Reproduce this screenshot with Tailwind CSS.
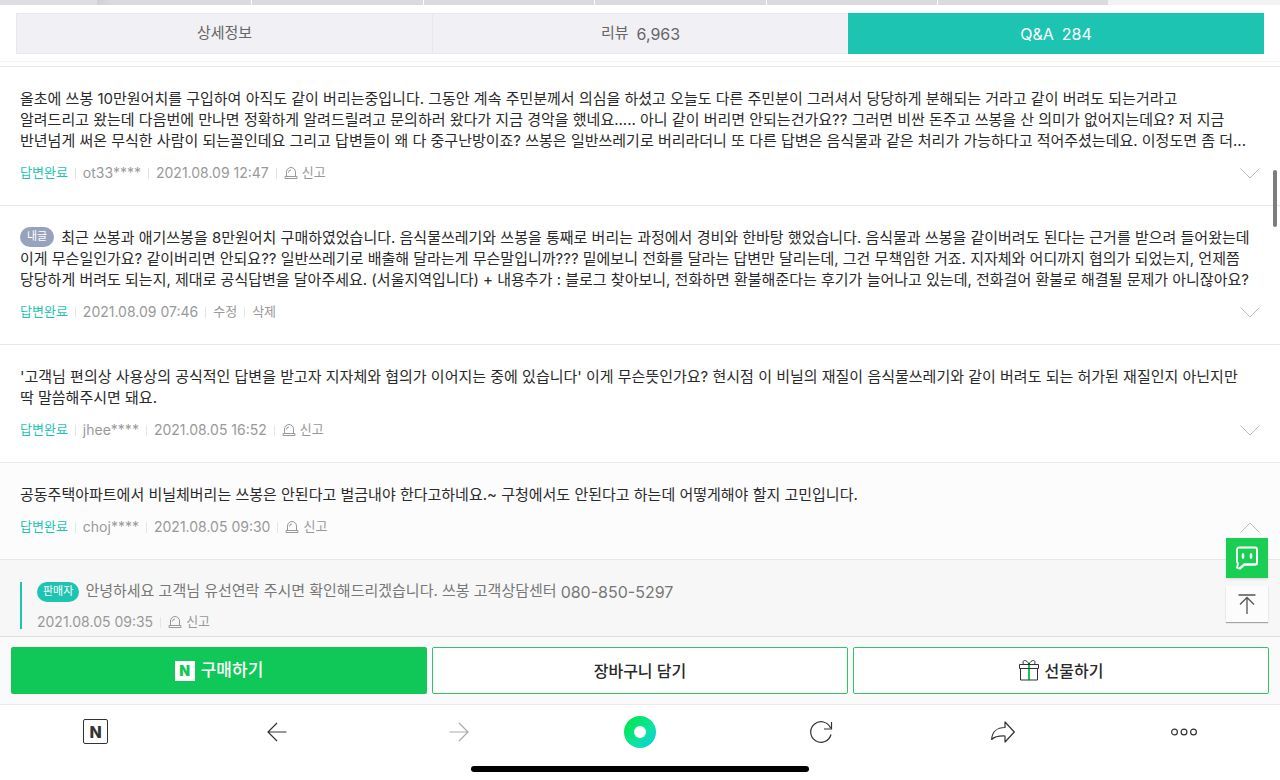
<!DOCTYPE html>
<html lang="ko">
<head>
    <meta charset="UTF-8">
    <meta name="viewport" content="width=device-width, initial-scale=1.0">
    <title>Q&amp;A</title>
    <script src="https://cdn.jsdelivr.net/npm/@tailwindcss/browser@4"></script>
</head>
<body class="relative flex h-screen flex-col overflow-hidden bg-white font-['Inter','Noto_Sans_CJK_KR',sans-serif] text-[#2a2a2a]">
    <!-- Shared icons -->
    <svg class="hidden" xmlns="http://www.w3.org/2000/svg">
        <symbol id="siren" viewBox="0 0 14 14" fill="none" stroke="currentColor">
            <path d="M2.5 10.5V6a4.5 4.5 0 0 1 9 0v4.5M1 12.5v-2h12v2zM4.5 6.500A2.500 2.500 0 0 1 7 4" />
        </symbol>
        <symbol id="chevron" viewBox="0 0 20 11" fill="none" stroke="currentColor">
            <path d="M.5.5 10 10 19.500.5" />
        </symbol>
    </svg>

    <!-- Page tabs -->
    <div class="flex h-[5px] shrink-0 bg-[#f3f3f5]">
        <div class="w-[97px] bg-[#dedee2]"></div>
        <div class="w-[155px] border-r border-white bg-linear-to-r from-[#cfcfd4] to-[#dbdbdf] to-10%"></div>
        <div class="w-[172px] border-r border-white bg-[#dbdbdf]"></div>
        <div class="w-[171px] border-r border-white bg-[#dbdbdf]"></div>
        <div class="w-[172px] border-r border-white bg-[#dbdbdf]"></div>
        <div class="w-[171px] border-r border-white bg-[#dbdbdf]"></div>
        <div class="w-[170px] bg-[#dbdbdf]"></div>
    </div>

    <nav class="shrink-0 border-b border-[#f3f3f3] px-4 pt-2 pb-[7px]">
        <div class="grid h-[41px] grid-cols-3 text-[15px] text-[#666]">
            <a href="#" class="flex items-center justify-center border border-r-0 border-[#e8e8ec] bg-[#f0f0f5]">상세정보</a>
            <a href="#" class="flex items-center justify-center gap-2 border border-r-0 border-[#e8e8ec] bg-[#f0f0f5]">리뷰 <span class="text-base">6,963</span></a>
            <a href="#" class="flex items-center justify-center gap-2 bg-[#1ec4b2] text-base text-white">Q&amp;A <span>284</span></a>
        </div>
    </nav>

    <main class="mt-1 min-h-0 flex-1 overflow-hidden border-t border-[#e8e8e8]">
        <article class="border-b border-[#e8e8e8] px-5 pt-[21px] pb-[23px]">
            <p class="text-[15px] leading-[21px] whitespace-nowrap">올초에 쓰봉 10만원어치를 구입하여 아직도 같이 버리는중입니다. 그동안 계속 주민분께서 의심을 하셨고 오늘도 다른 주민분이 그러셔서 당당하게 분해되는 거라고 같이 버려도 되는거라고<br>
                알려드리고 왔는데 다음번에 만나면 정확하게 알려드릴려고 문의하러 왔다가 지금 경악을 했네요..... 아니 같이 버리면 안되는건가요?? 그러면 비싼 돈주고 쓰봉을 산 의미가 없어지는데요? 저 지금<br>
                반년넘게 써온 무식한 사람이 되는꼴인데요 그리고 답변들이 왜 다 중구난방이죠? 쓰봉은 일반쓰레기로 버리라더니 또 다른 답변은 음식물과 같은 처리가 가능하다고 적어주셨는데요. 이정도면 좀 더...</p>
            <div class="mt-[13px] flex h-[18px] items-center text-[13px] text-[#999]">
                <span class="text-[#1ec4b2]">답변완료</span>
                <span class="mx-[7px] h-[11px] w-px bg-[#e5e5e5]"></span>
                <span class="text-sm">ot33****</span>
                <span class="mx-[7px] h-[11px] w-px bg-[#e5e5e5]"></span>
                <span class="text-sm">2021.08.09 12:47</span>
                <span class="mx-[7px] h-[11px] w-px bg-[#e5e5e5]"></span>
                <button type="button" class="flex items-center gap-1"><svg class="size-[14px]"><use href="#siren" /></svg>신고</button>
                <button type="button" aria-label="펼치기" class="ml-auto text-[#bbb]"><svg class="h-[11px] w-5"><use href="#chevron" /></svg></button>
            </div>
        </article>

        <article class="border-b border-[#e8e8e8] px-5 pt-[21px] pb-[23px]">
            <p class="text-[15px] leading-[21px] whitespace-nowrap"><span class="mr-[7px] inline-block h-5 rounded-full bg-[#97a2bd] px-[7px] align-top text-[11px] leading-[19px] text-white">내글</span>최근 쓰봉과 애기쓰봉을 8만원어치 구매하였었습니다. 음식물쓰레기와 쓰봉을 통째로 버리는 과정에서 경비와 한바탕 했었습니다. 음식물과 쓰봉을 같이버려도 된다는 근거를 받으려 들어왔는데<br>
                이게 무슨일인가요? 같이버리면 안되요?? 일반쓰레기로 배출해 달라는게 무슨말입니까??? 밑에보니 전화를 달라는 답변만 달리는데, 그건 무책임한 거죠. 지자체와 어디까지 협의가 되었는지, 언제쯤<br>
                당당하게 버려도 되는지, 제대로 공식답변을 달아주세요. (서울지역입니다) + 내용추가 : 블로그 찾아보니, 전화하면 환불해준다는 후기가 늘어나고 있는데, 전화걸어 환불로 해결될 문제가 아니잖아요?</p>
            <div class="mt-[13px] flex h-[18px] items-center text-[13px] text-[#999]">
                <span class="text-[#1ec4b2]">답변완료</span>
                <span class="mx-[7px] h-[11px] w-px bg-[#e5e5e5]"></span>
                <span class="text-sm">2021.08.09 07:46</span>
                <span class="mx-[7px] h-[11px] w-px bg-[#e5e5e5]"></span>
                <button type="button">수정</button>
                <span class="mx-[7px] h-[11px] w-px bg-[#e5e5e5]"></span>
                <button type="button">삭제</button>
                <button type="button" aria-label="펼치기" class="ml-auto text-[#bbb]"><svg class="h-[11px] w-5"><use href="#chevron" /></svg></button>
            </div>
        </article>

        <article class="border-b border-[#e8e8e8] px-5 pt-[21px] pb-[23px]">
            <p class="text-[15px] leading-[21px] whitespace-nowrap">'고객님 편의상 사용상의 공식적인 답변을 받고자 지자체와 협의가 이어지는 중에 있습니다' 이게 무슨뜻인가요? 현시점 이 비닐의 재질이 음식물쓰레기와 같이 버려도 되는 허가된 재질인지 아닌지만<br>
                딱 말씀해주시면 돼요.</p>
            <div class="mt-[13px] flex h-[18px] items-center text-[13px] text-[#999]">
                <span class="text-[#1ec4b2]">답변완료</span>
                <span class="mx-[7px] h-[11px] w-px bg-[#e5e5e5]"></span>
                <span class="text-sm">jhee****</span>
                <span class="mx-[7px] h-[11px] w-px bg-[#e5e5e5]"></span>
                <span class="text-sm">2021.08.05 16:52</span>
                <span class="mx-[7px] h-[11px] w-px bg-[#e5e5e5]"></span>
                <button type="button" class="flex items-center gap-1"><svg class="size-[14px]"><use href="#siren" /></svg>신고</button>
                <button type="button" aria-label="펼치기" class="ml-auto text-[#bbb]"><svg class="h-[11px] w-5"><use href="#chevron" /></svg></button>
            </div>
        </article>

        <article class="border-b border-[#e8e8e8] bg-[#fcfcfc] px-5 pt-[21px] pb-[23px]">
            <p class="text-[15px] leading-[21px] whitespace-nowrap">공동주택아파트에서 비닐체버리는 쓰봉은 안된다고 벌금내야 한다고하네요.~ 구청에서도 안된다고 하는데 어떻게해야 할지 고민입니다.</p>
            <div class="mt-[13px] flex h-[18px] items-center text-[13px] text-[#999]">
                <span class="text-[#1ec4b2]">답변완료</span>
                <span class="mx-[7px] h-[11px] w-px bg-[#e5e5e5]"></span>
                <span class="text-sm">choj****</span>
                <span class="mx-[7px] h-[11px] w-px bg-[#e5e5e5]"></span>
                <span class="text-sm">2021.08.05 09:30</span>
                <span class="mx-[7px] h-[11px] w-px bg-[#e5e5e5]"></span>
                <button type="button" class="flex items-center gap-1"><svg class="size-[14px]"><use href="#siren" /></svg>신고</button>
                <button type="button" aria-label="접기" class="ml-auto text-[#bbb]"><svg class="h-[11px] w-5 rotate-180"><use href="#chevron" /></svg></button>
            </div>
        </article>

        <!-- Seller reply -->
        <section class="bg-[#f7f7f7] px-5 pt-[22px] pb-8">
            <div class="border-l-2 border-[#1ec4b2] pl-[15px]">
                <p class="flex h-[19px] items-center text-[15px] text-[#777]"><span class="mr-[6px] h-5 rounded-full bg-[#1ec4b2] px-[6px] text-[11px] leading-[19px] text-white">판매자</span>안녕하세요 고객님 유선연락 주시면 확인해드리겠습니다. 쓰봉 고객상담센터 <span class="ml-1 text-base">080-850-5297</span></p>
                <div class="mt-[14px] flex h-[14px] items-center text-[13px] text-[#999]">
                    <span class="text-sm">2021.08.05 09:35</span>
                    <span class="mx-[7px] h-[11px] w-px bg-[#e5e5e5]"></span>
                    <button type="button" class="flex items-center gap-1"><svg class="size-[14px]"><use href="#siren" /></svg>신고</button>
                </div>
            </div>
        </section>
    </main>

    <!-- Purchase bar -->
    <div class="grid shrink-0 grid-cols-3 gap-[5px] border-t border-[#dedede] bg-[#fafafa] px-[11px] py-[10px] text-base font-medium">
        <button type="button" class="flex h-[47px] items-center justify-center gap-[6px] rounded-xs bg-[#10c858] text-[17px] text-white">
            <span class="flex size-5 items-center justify-center bg-white text-sm font-black text-[#10c858]">N</span>구매하기
        </button>
        <button type="button" class="h-[47px] rounded-xs border border-[#2fc468] bg-white">장바구니 담기</button>
        <button type="button" class="flex h-[47px] items-center justify-center gap-[6px] rounded-xs border border-[#2fc468] bg-white">
            <svg class="h-[21px] w-5" viewBox="0 0 20 21" fill="none" stroke="#333">
                <path stroke="#10c858" stroke-width="2" d="M10 5v15" />
                <path d="M.5 4.500h19v4H.5zM1.500 8.500v11.500h17V8.500M10 4.500C9 1.500 7 .5 5.500.5S3.500 2.500 4.500 4.500M10 4.500C11 1.500 13 .5 14.500.5s2 2 1 4" />
            </svg>선물하기
        </button>
    </div>

    <!-- Browser toolbar -->
    <footer class="shrink-0 border-t border-[#ebebeb] px-[5px] text-[#333]">
        <div class="grid h-[53px] grid-cols-7 place-items-center">
            <button type="button" aria-label="홈" class="flex size-[25px] items-center justify-center rounded-[2px] border border-[#333] text-base font-extrabold">N</button>
            <button type="button" aria-label="뒤로"><svg class="size-5" viewBox="0 0 20 20" fill="none" stroke="currentColor" stroke-width="1.200"><path d="M19.500 10H1M10 1 1 10l9 9" /></svg></button>
            <button type="button" aria-label="앞으로" class="text-[#aaa]"><svg class="size-5" viewBox="0 0 20 20" fill="none" stroke="currentColor" stroke-width="1.200"><path d="M.5 10H19M10 1l9 9-9 9" /></svg></button>
            <button type="button" aria-label="그린닷" class="flex size-8 items-center justify-center rounded-full bg-linear-to-br from-[#03e65c] from-20% via-[#10e3a0] via-60% to-[#20c4f0]"><span class="size-3 rounded-full bg-white"></span></button>
            <button type="button" aria-label="새로고침"><svg class="size-6" viewBox="0 0 24 24" fill="none" stroke="currentColor" stroke-width="1.200"><path d="M22 14.500A10.300 10.300 0 1 1 21.500 8M22.500 2v7H15" /></svg></button>
            <button type="button" aria-label="공유"><svg class="h-[22px] w-6" viewBox="0 0 24 22" fill="none" stroke="currentColor" stroke-width="1.200" stroke-linejoin="round"><path d="M14 1v5.500C6 6.500 1 11 .7 18.500 4 15 8 14.800 14 15v6l9.300-10z" /></svg></button>
            <button type="button" aria-label="더보기"><svg class="h-2 w-[26px]" viewBox="0 0 26 8" fill="none" stroke="currentColor" stroke-width="1.200"><circle cx="3.500" cy="4" r="2.900" /><circle cx="13" cy="4" r="2.900" /><circle cx="22.500" cy="4" r="2.900" /></svg></button>
        </div>
        <div class="mx-auto my-2 h-[6px] w-[338px] rounded-full bg-black"></div>
    </footer>

    <!-- Scrollbar and floating buttons -->
    <div class="absolute top-[170px] right-[3px] h-[57px] w-1 rounded-full bg-[#7d7d7d]"></div>
    <div class="absolute right-3 bottom-[158px] flex w-[42px] flex-col gap-2">
        <button type="button" aria-label="톡톡 문의" class="flex h-10 items-center justify-center bg-[#19ce52] shadow-sm">
            <svg class="size-6" viewBox="0 0 24 24" fill="none" stroke="white">
                <path stroke-width="1.800" stroke-linejoin="round" d="M4 1.500h16a2 2 0 0 1 2 2v13a2 2 0 0 1-2 2H9l-4.500 4-2.500-.8 1-4.200L2 16V3.500a2 2 0 0 1 2-2z" />
                <path stroke-width="2" d="M22 4v12.500a2 2 0 0 1-2 2H9.500L4.500 23" />
                <path stroke-width="2.500" stroke-linecap="round" d="M8 8.500v3M16 8.500v3" />
            </svg>
        </button>
        <button type="button" aria-label="맨 위로" class="flex h-9 items-center justify-center bg-[#fcfcfc] text-[#555] shadow-[0_1px_1px_#00000055]">
            <svg class="h-5 w-[18px]" viewBox="0 0 18 20" fill="none" stroke="currentColor"><path stroke-width="1.500" d="M.5 1h17" /><path stroke-width="1.300" d="M9 20V3.500M2 10.500l7-7 7 7" /></svg>
        </button>
    </div>
</body>
</html>
